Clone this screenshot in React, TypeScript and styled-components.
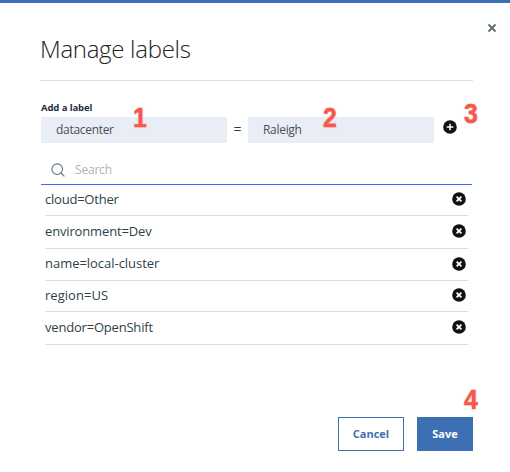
import React from 'react';
import styled, { createGlobalStyle } from 'styled-components';

const Global = createGlobalStyle`
  *, *::before, *::after { box-sizing: border-box; }
  html, body { margin: 0; background: #fff; }
  body { font-family: "Open Sans", "Noto Sans", sans-serif; color: #2f3f4a; }
  button, input { font-family: inherit; margin: 0; border-radius: 0; }
`;

const Modal = styled.section`
  position: relative;
  width: 510px;
  height: 472px;
  padding: 30px 37px 21px 40px;
  border-top: 3px solid #3d70b2;
  background: #fff;
  display: flex;
  flex-direction: column;
  overflow: hidden;
`;

const CloseButton = styled.button`
  position: absolute;
  top: 20px;
  right: 13px;
  padding: 0;
  border: 0;
  background: none;
  width: 10px;
  height: 10px;
  svg { display: block; }
`;

const Header = styled.header`
  height: 48px;
  border-bottom: 1px solid #dfdfdf;
`;

const Title = styled.h2`
  margin: 0;
  font-size: 24px;
  line-height: 32px;
  font-weight: 300;
  letter-spacing: -0.3px;
  color: #222;
  white-space: nowrap;
`;

const FieldLabel = styled.label`
  margin: 20px 0 0 1px;
  height: 16px;
  line-height: 14px;
  font-size: 9.5px;
  font-weight: 700;
  letter-spacing: -0.1px;
  color: #1d2f3d;
`;

const FieldRow = styled.div`
  display: flex;
  margin-left: 1px;
  height: 26px;
`;

const Field = styled.input`
  width: 186px;
  height: 26px;
  padding: 0 15px 2px;
  border: 0;
  outline: 0;
  background: #e9eef6;
  color: #4b4f54;
  font-size: 12px;
  letter-spacing: -0.3px;
`;

const Equals = styled.span`
  width: 21px;
  text-align: center;
  font-size: 14px;
  line-height: 24px;
`;

const IconButton = styled.button`
  padding: 0;
  border: 0;
  background: none;
  width: 14px;
  height: 14px;
  flex: none;
  svg { display: block; }
`;

const AddButton = styled(IconButton)`
  margin: 3px 0 0 9px;
`;

const SearchBar = styled.div`
  display: flex;
  align-items: center;
  margin: 12px 1px 0 1px;
  height: 30px;
  padding: 0 0 0 10px;
  border-bottom: 1px solid #3d6df5;
`;

const SearchInput = styled.input`
  width: 200px;
  padding: 0;
  margin-left: 10px;
  border: 0;
  outline: 0;
  background: none;
  font-size: 12px;
  letter-spacing: -0.2px;
  &::placeholder { color: #adb2b6; opacity: 1; }
`;

const List = styled.ul`
  list-style: none;
  margin: 0 5px;
  padding: 0;
`;

const Item = styled.li<{ $h: number; $gap: string }>`
  display: flex;
  align-items: center;
  justify-content: space-between;
  height: ${(p) => p.$h}px;
  padding: 0 2px 2px 0;
  border-bottom: 1px solid #dedede;
  font-size: 13px;
  line-height: 18px;
  span {
    letter-spacing: ${(p) => p.$gap};
    padding-bottom: 1px;
  }
`;

const Footer = styled.footer`
  display: flex;
  justify-content: flex-end;
  gap: 13px;
  margin-top: auto;
`;

const Button = styled.button<{ $primary?: boolean }>`
  width: ${(p) => (p.$primary ? 56 : 66)}px;
  height: 34px;
  padding: 0 0 1px;
  border: 1px solid #3d70b2;
  background: ${(p) => (p.$primary ? '#3d70b2' : '#fff')};
  color: ${(p) => (p.$primary ? '#fff' : '#3d70b2')};
  font-size: 11px;
  font-weight: 700;
`;

const Callout = styled.span<{ $x: number; $y: number }>`
  position: absolute;
  left: ${(p) => p.$x}px;
  top: ${(p) => p.$y}px;
  width: 16px;
  text-align: center;
  font: 700 27px/26px "Liberation Sans", sans-serif;
  transform: scaleX(0.92);
  color: #fb5648;
  -webkit-text-stroke: 0.4px #fb5648;
  text-shadow: 0 0 2px #bbb, 0 0 1px #fff;
`;

const CircleIcon = ({ cross = false }: { cross?: boolean }) => (
  <svg width="14" height="14" viewBox="0 0 14 14">
    <circle cx="7" cy="7" r="6.8" fill="#111" />
    <path
      d={cross ? 'M4.6 4.6l4.8 4.8M9.4 4.6l-4.8 4.8' : 'M7 3.7v6.6M3.7 7h6.6'}
      stroke="#fff"
      strokeWidth={cross ? 1.9 : 1.5}
    />
  </svg>
);

const labels = [
  { text: 'cloud=Other', h: 31, gap: '-0.22px' },
  { text: 'environment=Dev', h: 33, gap: '-0.15px' },
  { text: 'name=local-cluster', h: 32, gap: '-0.03px' },
  { text: 'region=US', h: 31, gap: '0.03px' },
  { text: 'vendor=OpenShift', h: 33, gap: '-0.2px' },
];

export default function App() {
  return (
    <>
      <Global />
      <Modal>
        <CloseButton aria-label="Close">
          <svg width="10" height="10" viewBox="0 0 10 10">
            <path d="M1.5 1.5l7 7M8.5 1.5l-7 7" stroke="#5a6872" strokeWidth="1.8" />
          </svg>
        </CloseButton>
        <Header>
          <Title>Manage labels</Title>
        </Header>
        <FieldLabel htmlFor="key">Add a label</FieldLabel>
        <FieldRow>
          <Field id="key" defaultValue="datacenter" />
          <Equals>=</Equals>
          <Field defaultValue="Raleigh" aria-label="Value" />
          <AddButton aria-label="Add">
            <CircleIcon />
          </AddButton>
        </FieldRow>
        <SearchBar>
          <svg width="14" height="14" viewBox="0 0 14 14" fill="none" stroke="#66727b" strokeWidth="1.1">
            <circle cx="6.2" cy="6.2" r="5.3" />
            <path d="M10 10l3.4 3.4" />
          </svg>
          <SearchInput placeholder="Search" aria-label="Search" />
        </SearchBar>
        <List>
          {labels.map((l) => (
            <Item key={l.text} $h={l.h} $gap={l.gap}>
              <span>{l.text}</span>
              <IconButton aria-label={`Remove ${l.text}`}>
                <CircleIcon cross />
              </IconButton>
            </Item>
          ))}
        </List>
        <Footer>
          <Button>Cancel</Button>
          <Button $primary>Save</Button>
        </Footer>
        <Callout $x={132} $y={102}>1</Callout>
        <Callout $x={322} $y={102}>2</Callout>
        <Callout $x={463} $y={98}>3</Callout>
        <Callout $x={463} $y={384}>4</Callout>
      </Modal>
    </>
  );
}
